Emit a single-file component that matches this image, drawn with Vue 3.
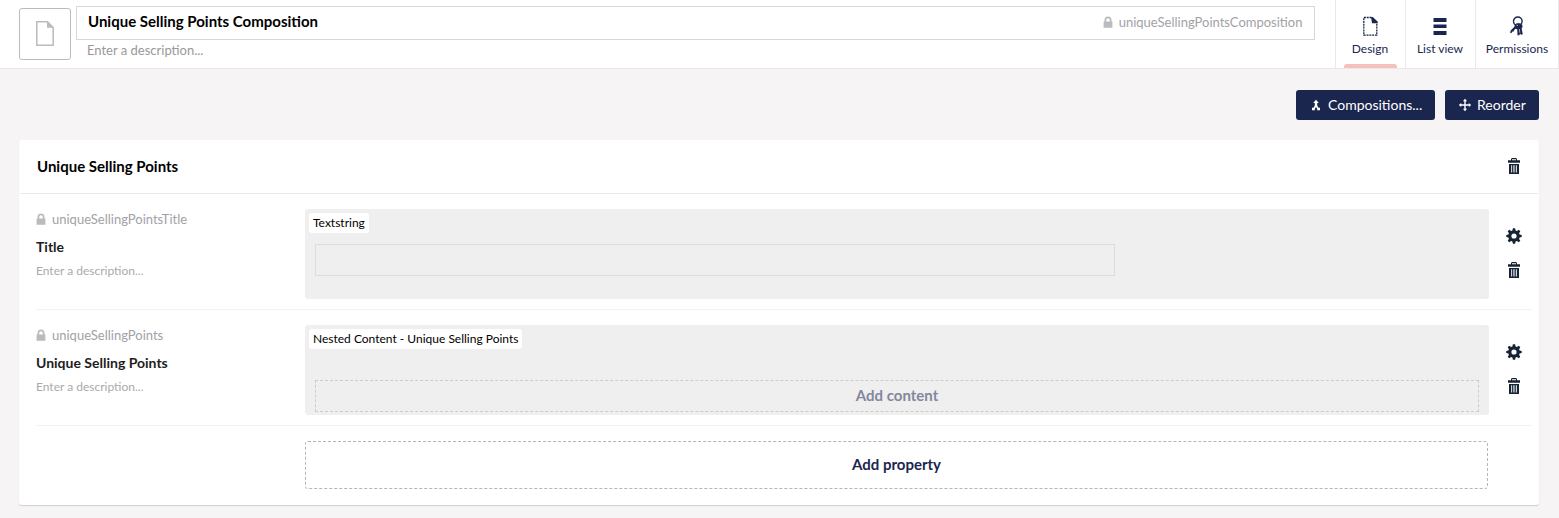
<script setup>
const tabs = [
  { id: 'design', label: 'Design', active: true },
  { id: 'list', label: 'List view' },
  { id: 'permissions', label: 'Permissions' },
]

const properties = [
  { alias: 'uniqueSellingPointsTitle', label: 'Title', editor: 'Textstring', kind: 'text' },
  { alias: 'uniqueSellingPoints', label: 'Unique Selling Points', editor: 'Nested Content - Unique Selling Points', kind: 'nested' },
]
</script>

<template>
  <div class="page">
    <svg class="defs" width="0" height="0" aria-hidden="true">
      <symbol id="lock" viewBox="0 0 10 12">
        <path d="M1.500 5.500V4.200a3.500 3.700 0 0 1 7 0v1.300h.9V11.800H.6V5.500zM3.200 5.500h3.600V4.200a1.800 2 0 0 0-3.600 0z" />
      </symbol>
      <symbol id="trash" viewBox="0 0 12 16">
        <path fill-rule="evenodd" d="M0 2.200h3V1l.9-.9h4.200L9 1v1.200h3v2.600H0zM4 2.200h4V1.200H4zM1 6h10v10H1zM3 7.300v7.200h.8V7.300zM4.900 7.300v7.200h.7V7.300zM6.500 7.300v7.200h.7V7.300zM8.200 7.300v7.200h.8V7.300z" />
      </symbol>
      <symbol id="gear" viewBox="0 0 16 16">
        <path fill-rule="evenodd" d="M6.900.3h2.200l.5 2.100 1.300.6 1.900-1.200 1.500 1.500-1.200 1.900.5 1.300 2.100.5v2.100l-2.100.5-.5 1.300 1.200 1.900-1.500 1.500-1.900-1.200-1.300.5-.5 2.100H6.900l-.5-2.100-1.300-.5-1.900 1.200-1.500-1.500 1.200-1.900-.5-1.300L.3 9.100V7l2.100-.5.5-1.300-1.200-1.900 1.500-1.500L5.100 3l1.300-.6zM8 5.400a2.600 2.600 0 1 0 0 5.200 2.600 2.600 0 0 0 0-5.200z" />
      </symbol>
    </svg>

    <header class="header">
      <div class="type-icon">
        <svg width="18" height="25" viewBox="0 0 18 25">
          <path d="M.8.8h10.700l5.700 5.700v17.700H.8z" fill="none" stroke="#bbbabf" stroke-width="1.500" />
          <path d="M11 .5v6.200h6.500z" fill="#bbbabf" />
        </svg>
      </div>
      <div class="names">
        <div class="name-box">
          <span class="name">Unique Selling Points Composition</span>
          <span class="alias"><svg class="lock"><use href="#lock" /></svg>uniqueSellingPointsComposition</span>
        </div>
        <div class="header-desc">Enter a description...</div>
      </div>
      <nav class="tabs">
        <div v-for="tab in tabs" :key="tab.id" class="tab" :class="[tab.id, { active: tab.active }]">
          <svg v-if="tab.id === 'design'" class="tab-icon" width="20" height="20" viewBox="0 0 20 20">
            <path d="M11.500 1.500H3.800v17.600h13V6" fill="none" stroke="#1b264f" stroke-width="1.300" stroke-dasharray="2 .8" />
            <path d="M11 .9h1.700l4.900 4.600v1.700H12z" fill="#1b264f" />
          </svg>
          <svg v-else-if="tab.id === 'list'" class="tab-icon" width="20" height="20" viewBox="0 0 20 20">
            <path d="M3.500 2h13v4h-13zM3.500 8.500h13v3.500h-13zM3.500 15h13v4h-13z" fill="#1b264f" />
          </svg>
          <svg v-else class="tab-icon" width="20" height="20" viewBox="0 0 20 20">
            <circle cx="10.800" cy="5.300" r="4.300" fill="none" stroke="#1b264f" stroke-width="1.400" />
            <path d="M7.800 8.200 10 7.300h3l2.300 1.500.2 2.200-.9 1.500 1.200 5.800-1.700.5-1.100-1.200-.6 1.600-1.900.1-.3-6-1.700-.6-1.200 1.200-1 1.800-1-.1-.9 1.600-1.400-.7.9-2.300 3.500-3.500z" fill="#1b264f" />
            <path d="m9.500 9 1.500.6M12.400 13l.4 3.800" stroke="#fff" stroke-width=".6" />
          </svg>
          <span>{{ tab.label }}</span>
        </div>
      </nav>
    </header>

    <main>
      <div class="toolbar">
        <button class="btn compositions">
          <svg width="12" height="12" viewBox="0 0 12 12">
            <path d="M6 .7 3.200 3.900h1.600v2.700L3.300 9.100 2 8.600v2.600h3.200l-.6-1L6 8.100l1.400 2.100-.6 1H10V8.600l-1.300.5-1.500-2.500V3.900h1.600z" fill="#fff" />
          </svg>
          Compositions...
        </button>
        <button class="btn reorder">
          <svg width="14" height="14" viewBox="0 0 14 14">
            <path d="M7 2v10M2 7h10" stroke="#fff" stroke-width="1.400" />
            <path d="M7 .8 4.900 3.200h4.200zM7 13.200l-2.100-2.400h4.200zM.8 7l2.400-2.100v4.200zM13.200 7l-2.400-2.100v4.200z" fill="#fff" />
          </svg>
          Reorder
        </button>
      </div>

      <section class="card">
        <div class="card-head">
          <h2>Unique Selling Points</h2>
          <svg class="trash"><use href="#trash" /></svg>
        </div>

        <div v-for="p in properties" :key="p.alias" class="row">
          <div class="info">
            <div class="alias"><svg class="lock"><use href="#lock" /></svg>{{ p.alias }}</div>
            <div class="label">{{ p.label }}</div>
            <div class="desc">Enter a description...</div>
          </div>
          <div class="preview">
            <span class="editor">{{ p.editor }}</span>
            <div v-if="p.kind === 'text'" class="input"></div>
            <div v-else class="add-content">Add content</div>
          </div>
          <div class="actions">
            <svg class="gear"><use href="#gear" /></svg>
            <svg class="trash"><use href="#trash" /></svg>
          </div>
        </div>

        <div class="add-property">Add property</div>
      </section>
    </main>
  </div>
</template>

<style>
body {
  background: #f6f4f5;
}
</style>

<style scoped>
.page,
.page * {
  box-sizing: border-box;
}
.page {
  width: 1559px;
  height: 518px;
  overflow: hidden;
  background: #f6f4f5;
  font-family: Lato, sans-serif;
  font-size: 15px;
  line-height: 20px;
  color: #000;
}
.defs {
  display: block;
}
.header {
  display: flex;
  height: 69px;
  padding-left: 19px;
  background: #fff;
  border-bottom: 1px solid #e9e9eb;
}
.type-icon {
  display: flex;
  align-items: center;
  justify-content: center;
  width: 52px;
  height: 52px;
  margin-top: 7.5px;
  border: 1px solid #bbbabf;
  border-radius: 3px;
}
.names {
  width: 1239px;
  margin: 6px 20px 0 5px;
}
.name-box {
  display: flex;
  justify-content: space-between;
  height: 34px;
  padding: 4px 12px 0 11px;
  border: 1px solid #d8d7d9;
}
.name {
  font-weight: 700;
}
.alias {
  display: flex;
  align-items: center;
  height: 20px;
  font-size: 13px;
  color: #a2a1a6;
}
.name-box .alias {
  margin: 1px -.5px 0 0;
}
.lock {
  width: 10px;
  height: 12px;
  margin-right: 6px;
  fill: #bbbabf;
}
.header-desc {
  padding-left: 11px;
  font-size: 13px;
  color: #999;
}
.tabs {
  display: flex;
  border-right: 1px solid #e9e9eb;
}
.tab {
  position: relative;
  display: flex;
  flex-direction: column;
  align-items: center;
  width: 70px;
  padding: 16px 1px 0 0;
  border-left: 1px solid #e9e9eb;
  font-size: 12px;
  color: #1b264f;
}
.tab.permissions {
  width: 83px;
  padding-right: 0;
}
.tab-icon {
  margin-bottom: 3px;
}
.tab.active::after {
  content: '';
  position: absolute;
  left: 8px;
  bottom: 0;
  width: 53px;
  height: 4px;
  border-radius: 3px 3px 0 0;
  background: #f5c1bc;
}
.toolbar {
  display: flex;
  justify-content: flex-end;
  gap: 10px;
  padding: 21px 20px 20px 0;
}
.btn {
  display: flex;
  align-items: center;
  height: 30px;
  padding: 0 0 0 14px;
  border: 0;
  border-radius: 3px;
  background: #1b264f;
  color: #fff;
  font: 14px/20px Lato, sans-serif;
}
.compositions {
  width: 139px;
  gap: 6px;
}
.reorder {
  width: 94px;
  padding-left: 13px;
  gap: 5px;
}
.card {
  width: 1520px;
  height: 365px;
  margin-left: 19px;
  background: #fff;
  border-radius: 3px;
  box-shadow: 0 1px 1px rgba(0, 0, 0, 0.16);
}
.card-head {
  display: flex;
  justify-content: space-between;
  height: 54px;
  margin: 0 1px;
  padding: 16px 18px 0 17px;
  border-bottom: 1px solid #e9e9eb;
}
h2 {
  margin: 0;
  font-size: 15px;
  line-height: 20px;
}
.trash {
  width: 12px;
  height: 16px;
  margin-top: 2px;
  fill: #162335;
}
.row {
  display: flex;
  height: 116px;
  margin: 0 7px 0 17px;
  padding-top: 15px;
  border-bottom: 1px solid #f3f3f5;
}
.info {
  flex: none;
  width: 269px;
}
.label {
  margin-top: 8px;
  font-size: 14px;
  font-weight: 700;
  color: #1d1d1d;
}
.desc {
  margin-top: 4px;
  font-size: 12px;
  color: #aaa;
}
.preview {
  flex: none;
  width: 1184px;
  height: 90px;
  padding: 4px 10px 0 4px;
  border-radius: 3px;
  background: #efefef;
}
.editor {
  display: block;
  width: max-content;
  height: 20px;
  padding: 0 4px;
  border-radius: 3px;
  background: #fff;
  font-size: 12px;
}
.input {
  width: 800px;
  height: 32px;
  margin: 11px 0 0 6px;
  border: 1px solid #dcdcdd;
}
.add-content {
  height: 32px;
  margin: 31px 0 0 6px;
  border: 1px dashed #ccc;
  text-align: center;
  line-height: 28px;
  font-weight: 700;
  color: #83889c;
}
.actions {
  display: flex;
  flex: none;
  flex-direction: column;
  align-items: center;
  width: 50px;
  padding-top: 19px;
}
.actions .trash {
  margin-top: 18px;
}
.gear {
  width: 16px;
  height: 16px;
  fill: #162335;
}
.add-property {
  width: 1183px;
  height: 48px;
  margin: 15px 0 0 286px;
  border: 1px dashed #b5b5b5;
  border-radius: 3px;
  text-align: center;
  line-height: 44px;
  font-weight: 700;
  color: #1b264f;
}
</style>
